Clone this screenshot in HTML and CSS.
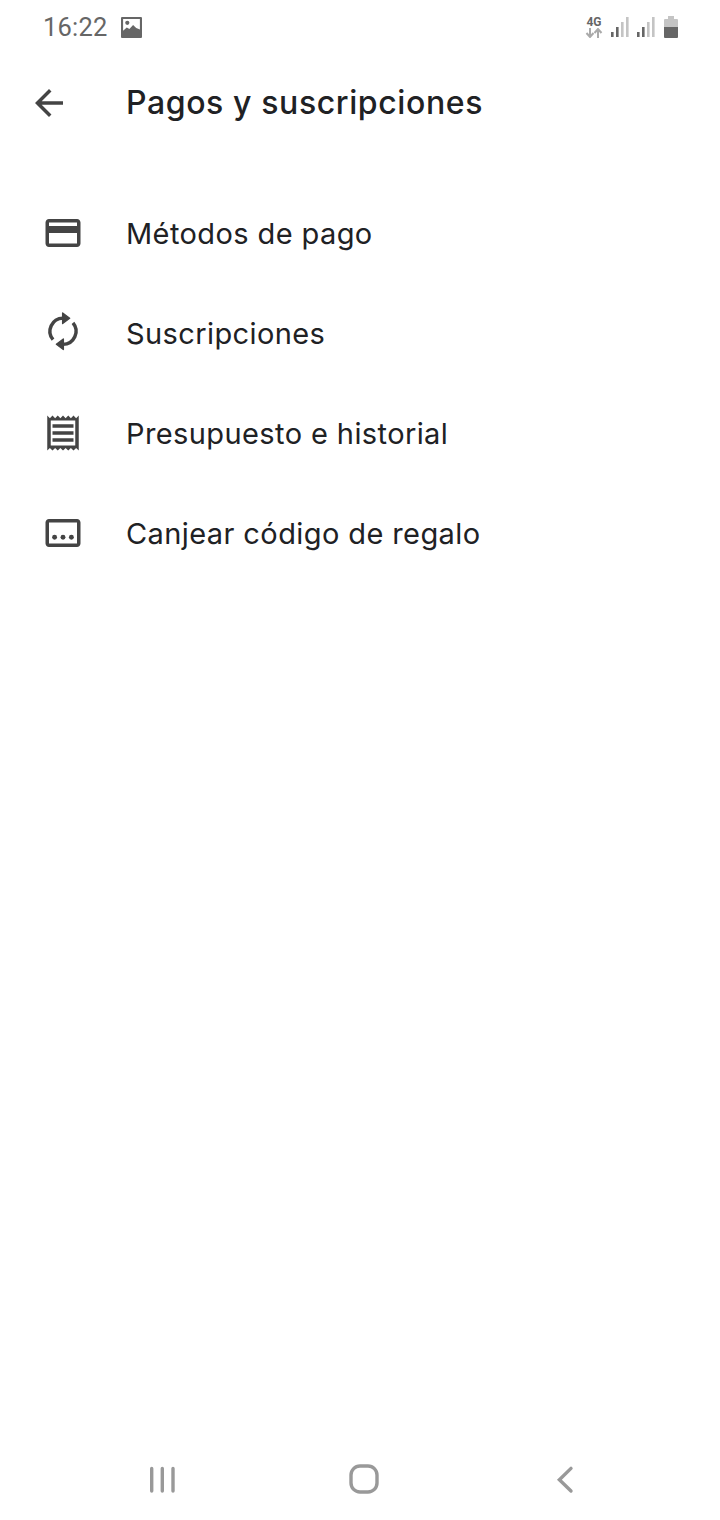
FILE: index.html
```html
<!DOCTYPE html>
<html lang="es">
<head>
    <meta charset="UTF-8">
    <meta name="viewport" content="width=device-width, initial-scale=1.0">
    <title>Pagos y suscripciones</title>
    <link rel="stylesheet" href="styles.css">
</head>
<body>
    <div class="page">
        <div class="status-bar">
            <span class="time">16:22</span>
            <svg class="status-image" viewBox="1 1 20 20">
                <path fill-rule="evenodd" d="M2 1h18a1 1 0 0 1 1 1v18a1 1 0 0 1-1 1H2a1 1 0 0 1-1-1V2a1 1 0 0 1 1-1zM3 3v11l3.500-3 2.500 1.500 3.500-4 3 3 3.500 1.500V3z"/>
                <circle cx="7" cy="6.500" r="2"/>
            </svg>
            <div class="status-right">
                <div class="network">
                    <span class="network-label">4G</span>
                    <svg class="network-arrows" viewBox="0 0 18 10">
                        <path d="M5 0v8M1.500 5l3.500 4 3.500-4M13 10V2M9.500 5L13 1l3.500 4"/>
                    </svg>
                </div>
                <svg class="signal" viewBox="0 0 18 20">
                    <rect class="on" x="0" y="15" width="2.600" height="5"/>
                    <rect class="on" x="5" y="10" width="2.600" height="10"/>
                    <rect class="off" x="10" y="5" width="2.600" height="15"/>
                    <rect class="off" x="15" y="0" width="2.600" height="20"/>
                </svg>
                <svg class="signal" viewBox="0 0 18 20">
                    <rect class="on" x="0" y="15" width="2.600" height="5"/>
                    <rect class="on" x="5" y="10" width="2.600" height="10"/>
                    <rect class="off" x="10" y="5" width="2.600" height="15"/>
                    <rect class="off" x="15" y="0" width="2.600" height="20"/>
                </svg>
                <svg class="battery" viewBox="0 0 14 22">
                    <path class="off" d="M4 0h6v3h3a1 1 0 0 1 1 1v7H0V4a1 1 0 0 1 1-1h3z"/>
                    <path class="on" d="M0 11h14v10a1 1 0 0 1-1 1H1a1 1 0 0 1-1-1z"/>
                </svg>
            </div>
        </div>

        <header class="app-bar">
            <svg class="icon back-icon" viewBox="0 0 24 24">
                <path d="M20 11H7.830l5.590-5.590L12 4l-8 8 8 8 1.410-1.410L7.830 13H20v-2z"/>
            </svg>
            <h1>Pagos y suscripciones</h1>
        </header>

        <ul class="menu">
            <li class="menu-item">
                <svg class="icon" viewBox="0 0 24 24">
                    <path d="M20 4H4c-1.110 0-1.990.890-1.990 2L2 18c0 1.110.890 2 2 2h16c1.110 0 2-.890 2-2V6c0-1.110-.890-2-2-2zm0 14H4v-6h16v6zm0-10H4V6h16v2z"/>
                </svg>
                <span>Métodos de pago</span>
            </li>
            <li class="menu-item">
                <svg class="icon" viewBox="0 0 24 24">
                    <path class="sync-arc" d="M6.300 15.800A7.500 7.500 0 0 1 12 3.500M17.700 6.200A7.500 7.500 0 0 1 12 18.500"/>
                    <path class="sync-head" d="M11.800 .600l4 3-4 3zM12.200 15.400l-4 3 4 3z"/>
                </svg>
                <span>Suscripciones</span>
            </li>
            <li class="menu-item">
                <svg class="icon" viewBox="0 0 24 24">
                    <path d="M19.500 3.500L18 2l-1.500 1.500L15 2l-1.500 1.500L12 2l-1.500 1.500L9 2 7.500 3.500 6 2 4.500 3.500 3 2v20l1.500-1.500L6 22l1.500-1.500L9 22l1.500-1.500L12 22l1.500-1.500L15 22l1.500-1.500L18 22l1.500-1.500L21 22V2l-1.500 1.500zM19 19.090H5V4.910h14v14.180zM6 15h12v2H6zm0-4h12v2H6zm0-4h12v2H6z"/>
                </svg>
                <span>Presupuesto e historial</span>
            </li>
            <li class="menu-item">
                <svg class="icon" viewBox="0 0 24 24">
                    <path d="M20 4H4c-1.100 0-2 .900-2 2v12c0 1.100.900 2 2 2h16c1.100 0 2-.900 2-2V6c0-1.100-.900-2-2-2zm0 14H4V6h16v12z"/>
                    <circle cx="7.200" cy="14.400" r="1.400"/>
                    <circle cx="12" cy="14.400" r="1.400"/>
                    <circle cx="16.800" cy="14.400" r="1.400"/>
                </svg>
                <span>Canjear código de regalo</span>
            </li>
        </ul>

        <nav class="nav-bar">
            <div class="nav-button">
                <svg class="nav-icon" viewBox="0 0 30 30">
                    <path d="M4.700 4.400V27M15.300 4.400V27M26 4.400V27"/>
                </svg>
            </div>
            <div class="nav-button">
                <svg class="nav-icon" viewBox="0 0 30 30">
                    <rect x="2" y="2" width="26" height="26" rx="9"/>
                </svg>
            </div>
            <div class="nav-button">
                <svg class="nav-icon" viewBox="0 0 30 30">
                    <path d="M20 4.400L8.400 15.700 20 27"/>
                </svg>
            </div>
        </nav>
    </div>
</body>
</html>
```

FILE: styles.css
```css
body {
    margin: 0;
    background-color: #fff;
    font-family: Inter, Roboto, sans-serif;
    color: #202124;
}

.page {
    display: flex;
    flex-direction: column;
    height: 1520px;
    overflow: hidden;
}

.status-bar {
    display: flex;
    align-items: center;
    height: 54px;
    padding: 0 42px 0 43px;
    color: #666;
}

.time {
    font-family: Roboto, sans-serif;
    font-size: 25.500px;
    letter-spacing: 0.2px;
}

.status-image {
    width: 21px;
    height: 21px;
    margin-left: 13px;
    fill: #666;
}

.status-right {
    display: flex;
    align-items: center;
    gap: 8px;
    margin-left: auto;
}

.network {
    display: flex;
    flex-direction: column;
    align-items: center;
    width: 18px;
}

.network-label {
    font-family: Roboto, sans-serif;
    font-size: 12px;
    font-weight: 700;
    line-height: 12px;
}

.network-arrows {
    width: 18px;
    height: 10px;
    fill: none;
    stroke: #aaa;
    stroke-width: 2;
}

.signal {
    width: 18px;
    height: 20px;
}

.battery {
    width: 14px;
    height: 22px;
    margin-left: 1px;
}

.on {
    fill: #666;
}

.off {
    fill: #c4c4c4;
}

.icon {
    flex: none;
    width: 42px;
    height: 42px;
    fill: #444;
}

.sync-arc {
    fill: none;
    stroke: #444;
    stroke-width: 2;
}

.sync-head {
    stroke: #444;
    stroke-width: 0.8;
    stroke-linejoin: round;
}

.app-bar {
    display: flex;
    align-items: center;
    height: 98px;
    padding-left: 28px;
}

.back-icon {
    margin-right: 56px;
}

h1 {
    margin: 0 0 1px;
    font-size: 32px;
    font-weight: 500;
    letter-spacing: 0.6px;
}

.menu {
    margin: 31px 0 0;
    padding: 0;
    list-style: none;
}

.menu-item {
    display: flex;
    align-items: center;
    gap: 42px;
    height: 100px;
    padding-left: 42px;
    font-size: 29px;
    letter-spacing: 0.4px;
}

.nav-bar {
    display: flex;
    justify-content: center;
    height: 82px;
    margin-top: auto;
    padding-left: 8px;
}

.nav-button {
    display: flex;
    align-items: center;
    justify-content: center;
    width: 202px;
}

.nav-icon {
    width: 30px;
    height: 30px;
    fill: none;
    stroke: #999;
    stroke-width: 3.400;
    stroke-linecap: round;
}
```
